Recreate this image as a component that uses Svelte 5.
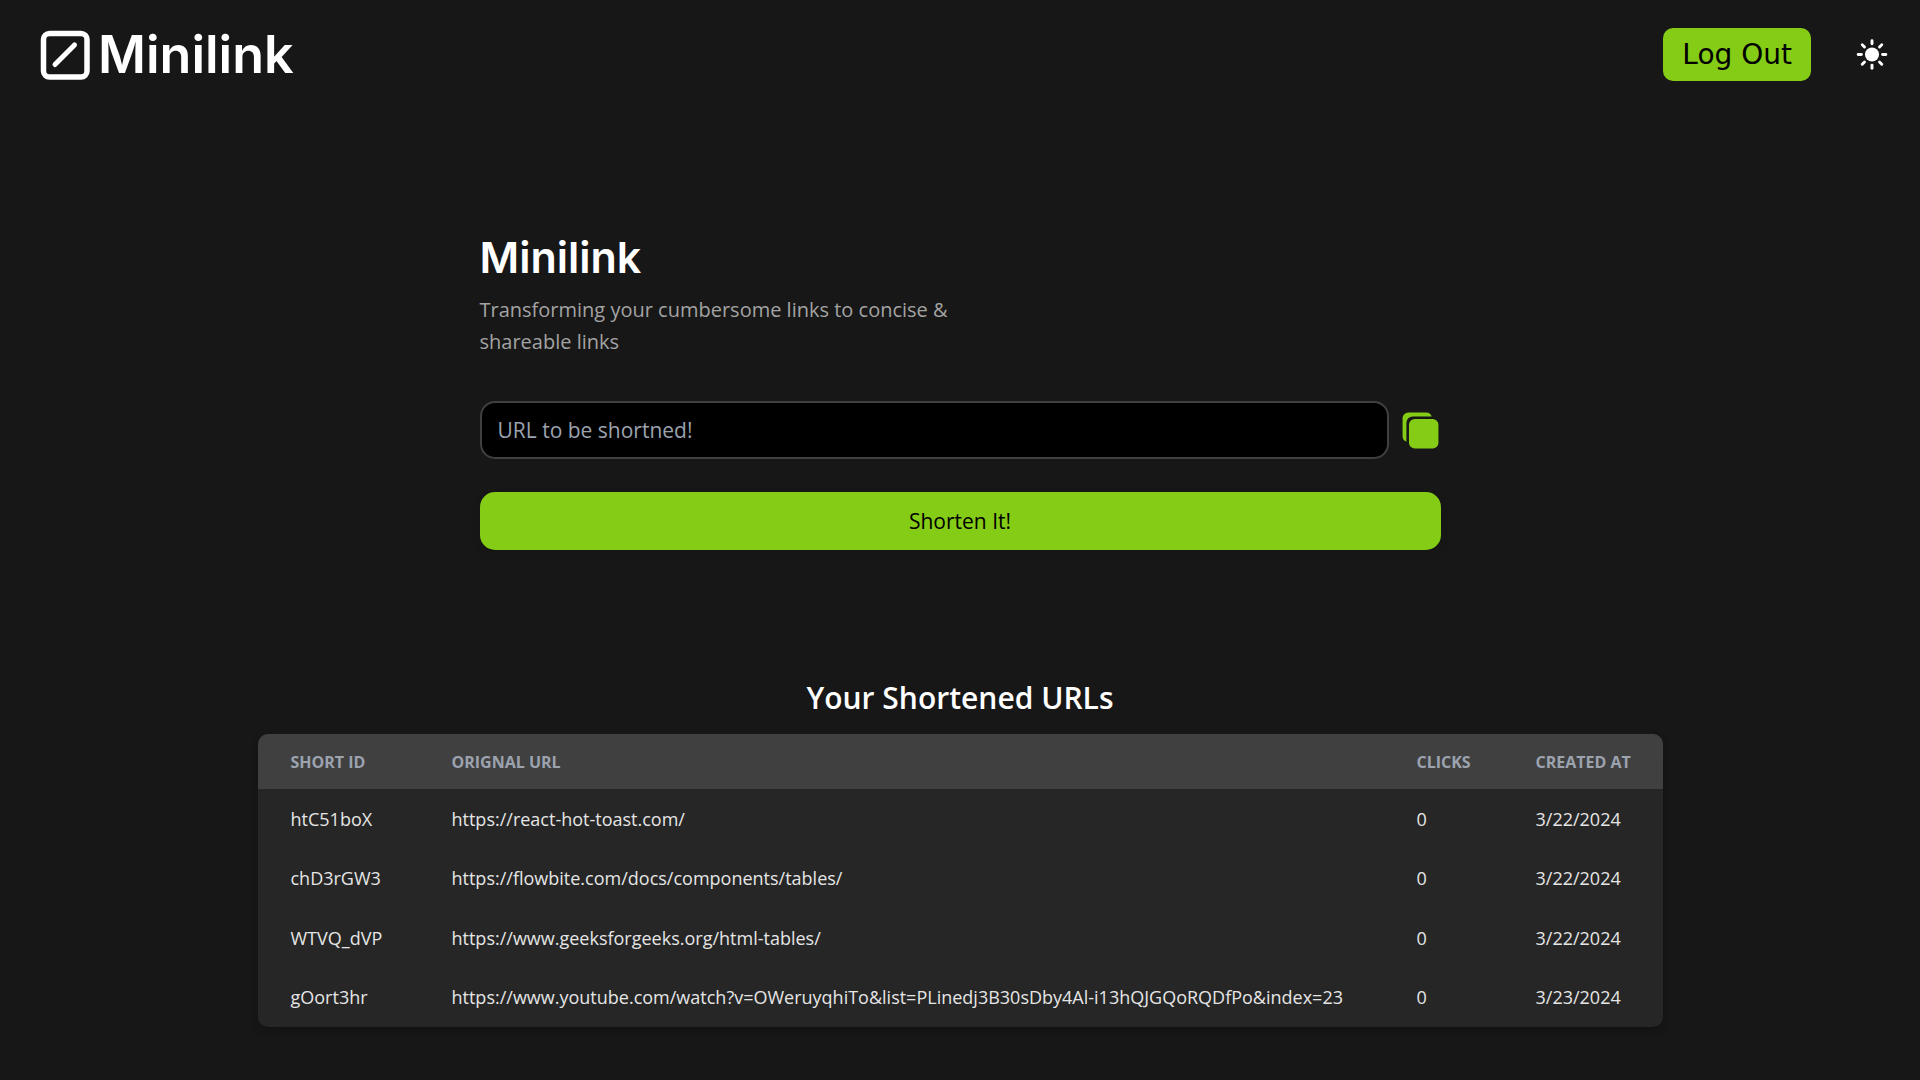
<script>
  const links = [
    { id: 'htC51boX', url: 'https://react-hot-toast.com/', clicks: 0, created: '3/22/2024' },
    { id: 'chD3rGW3', url: 'https://flowbite.com/docs/components/tables/', clicks: 0, created: '3/22/2024' },
    { id: 'WTVQ_dVP', url: 'https://www.geeksforgeeks.org/html-tables/', clicks: 0, created: '3/22/2024' },
    {
      id: 'gOort3hr',
      url: 'https://www.youtube.com/watch?v=OWeruyqhiTo&list=PLinedj3B30sDby4Al-i13hQJGQoRQDfPo&index=23',
      clicks: 0,
      created: '3/23/2024'
    }
  ];
  const rays = [0, 45, 90, 135, 180, 225, 270, 315];
  let url = $state('');
</script>

<header>
  <a class="brand" href="/">
    <svg width="50" height="50" viewBox="0 0 50 50" fill="none" stroke="#fff" aria-hidden="true">
      <rect x="3.5" y="3.5" width="43.5" height="43.5" rx="6" stroke-width="5.5" />
      <path d="M15 34.5 34.5 15" stroke-width="5" stroke-linecap="round" />
    </svg>
    <span>Minilink</span>
  </a>
  <div class="actions">
    <button class="logout" type="button">Log Out</button>
    <button class="icon" type="button" aria-label="Toggle theme">
      <svg width="34" height="34" viewBox="0 0 512 512" fill="#fff" aria-hidden="true">
        <circle cx="256" cy="248" r="106" />
        {#each rays as angle}
          <path
            d="M256 40v48"
            stroke="#fff"
            stroke-width="44"
            stroke-linecap="round"
            transform="rotate({angle} 256 248)"
          />
        {/each}
      </svg>
    </button>
  </div>
</header>

<main>
  <section class="hero">
    <h1>Minilink</h1>
    <p>Transforming your cumbersome links to concise &amp; shareable links</p>
    <form onsubmit={(e) => e.preventDefault()}>
      <div class="field">
        <input type="text" aria-label="URL to be shortened" placeholder="URL to be shortned!" bind:value={url} />
        <button class="icon" type="button" aria-label="Copy">
          <svg width="41" height="41" viewBox="0 0 512 512" fill="#84cc16" aria-hidden="true">
            <path d="M408 480H184a72 72 0 0 1-72-72V184a72 72 0 0 1 72-72h224a72 72 0 0 1 72 72v224a72 72 0 0 1-72 72z" />
            <path d="M160 80h235.880A72.120 72.120 0 0 0 328 32H104a72 72 0 0 0-72 72v224a72.120 72.120 0 0 0 48 67.880V160a80 80 0 0 1 80-80z" />
          </svg>
        </button>
      </div>
      <button class="submit" type="submit">Shorten It!</button>
    </form>
  </section>

  <section class="urls">
    <h2>Your Shortened URLs</h2>
    <table>
      <thead>
        <tr>
          <th class="id" scope="col">Short ID</th>
          <th scope="col">Orignal URL</th>
          <th class="clicks" scope="col">Clicks</th>
          <th class="created" scope="col">Created At</th>
        </tr>
      </thead>
      <tbody>
        {#each links as link}
          <tr>
            <td>{link.id}</td>
            <td>{link.url}</td>
            <td>{link.clicks}</td>
            <td>{link.created}</td>
          </tr>
        {/each}
      </tbody>
    </table>
  </section>
</main>

<style>
  :global(body) {
    margin: 0;
    background: #171717;
    color: #fff;
    font-family: 'Segoe UI', 'Open Sans', 'Noto Sans', sans-serif;
  }
  button {
    padding: 0;
    border: 0;
    font: inherit;
    cursor: pointer;
  }
  header {
    display: flex;
    align-items: center;
    justify-content: space-between;
    padding: 28px 31px 28px 40px;
  }
  .brand {
    display: flex;
    align-items: center;
    gap: 8px;
    color: #fff;
    text-decoration: none;
    font: 600 52px/50px Inter, sans-serif;
  }
  .actions {
    display: flex;
    align-items: center;
    gap: 44px;
  }
  .logout {
    padding: 0 19px;
    border-radius: 10px;
    background: #84cc16;
    color: #000;
    font: 400 28px/53px 'DejaVu Sans', sans-serif;
  }
  .icon {
    display: flex;
    background: none;
  }
  .hero {
    max-width: 961px;
    margin: 0 auto;
    padding-top: 123px;
  }
  h1 {
    margin: 0;
    font: 600 43px/50px Inter, sans-serif;
  }
  p {
    max-width: 490px;
    margin: 12px 0 0;
    color: #a3a3a3;
    font-size: 20px;
    line-height: 32px;
  }
  form {
    display: grid;
    gap: 33px;
    margin-top: 43px;
  }
  .field {
    display: flex;
    align-items: center;
    gap: 11px;
  }
  input {
    box-sizing: border-box;
    flex: 1;
    min-width: 0;
    height: 58px;
    padding: 0 16px;
    border: 2px solid #404040;
    border-radius: 15px;
    background: #000;
    color: #fff;
    font: inherit;
    font-size: 21px;
  }
  input::placeholder {
    color: #9ca3af;
    opacity: 1;
  }
  .submit {
    border-radius: 15px;
    background: #84cc16;
    color: #000;
    font-size: 21px;
    font-weight: 500;
    line-height: 58px;
    box-shadow: 0 4px 8px rgba(0, 0, 0, 0.1);
  }
  .urls {
    max-width: 1405px;
    margin: 0 auto;
    padding: 124px 0 52px;
  }
  h2 {
    margin: 0 0 12px;
    text-align: center;
    font-size: 30px;
    font-weight: 600;
    line-height: 48px;
  }
  table {
    width: 100%;
    table-layout: fixed;
    border-spacing: 0;
    border-radius: 10px;
    overflow: hidden;
    background: #262626;
    box-shadow: 0 4px 8px rgba(0, 0, 0, 0.2);
    text-align: left;
  }
  th,
  td {
    padding: 0 0 0 33px;
  }
  th {
    height: 55px;
    background: #404040;
    color: #9ca3af;
    font-size: 16px;
    font-weight: 700;
    text-transform: uppercase;
  }
  td {
    height: 59px;
    color: #e5e5e5;
    font-size: 18px;
    white-space: nowrap;
  }
  tr:nth-child(even) td {
    height: 60px;
  }
  .id {
    width: 128px;
  }
  .clicks {
    width: 86px;
  }
  .created {
    width: 127px;
  }
</style>
